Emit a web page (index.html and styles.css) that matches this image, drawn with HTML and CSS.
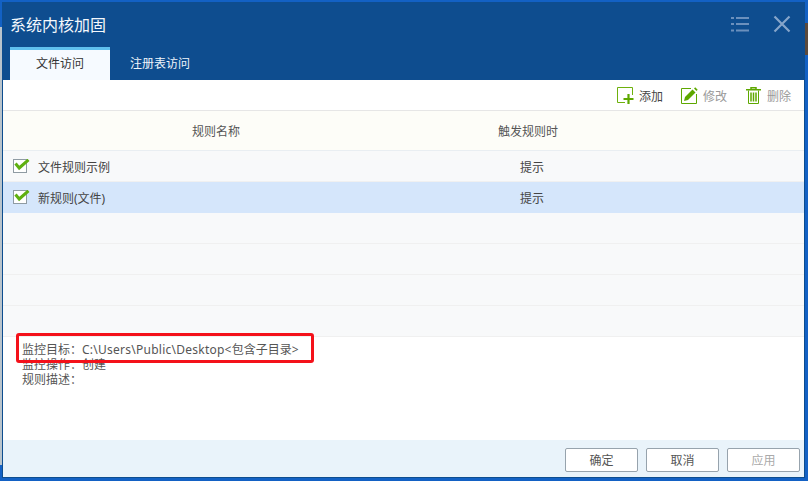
FILE: index.html
```html
<!DOCTYPE html>
<html lang="zh">
<head>
<meta charset="utf-8">
<title>系统内核加固</title>
<link rel="stylesheet" href="styles.css">
</head>
<body>
<div class="desk-strip"></div>
<div class="desk-thumb"></div>
<div class="window">
  <header class="titlebar">
    <div class="title-row">
      <h1 class="title">系统内核加固</h1>
      <div class="win-controls">
        <svg width="18" height="16" viewBox="0 0 18 16"><path d="M0 2h3M5 2h13M0 8h3M5 8h13M0 14.500h3M5 14.500h13" stroke="#6b90bd" stroke-width="2" fill="none"/></svg>
        <svg width="18" height="18" viewBox="0 0 18 18"><path d="M1.500 1.500l15 15M16.500 1.500l-15 15" stroke="#86a5ca" stroke-width="2.200" fill="none"/></svg>
      </div>
    </div>
    <nav class="tabs">
      <div class="tab tab-active">文件访问</div>
      <div class="tab">注册表访问</div>
    </nav>
  </header>
  <div class="toolbar">
    <div class="tool">
      <svg width="17" height="17" viewBox="0 0 17 17"><path d="M8 15.500H.5V.5h15V8" fill="none" stroke="#6eb10c"/><path d="M11.500 7v10M6.500 12h10" stroke="#5ea800" stroke-width="2.200" fill="none"/></svg>
      <span>添加</span>
    </div>
    <div class="tool tool-muted">
      <svg width="17" height="17" viewBox="0 0 17 17"><path d="M10 1.500H.5v15h15V7" fill="none" stroke="#5ea800"/><path d="M3 14l1-4 7.500-7.500 3 3L7 13z" fill="#5ea800"/><path d="M13 1.500l1.200-1.200 2.500 2.500-1.200 1.200z" fill="#5ea800"/></svg>
      <span>修改</span>
    </div>
    <div class="tool tool-muted">
      <svg width="17" height="17" viewBox="0 0 17 17"><path d="M1 2.800h15M6 2.500V.7h5v1.800" fill="none" stroke="#5ea800" stroke-width="1.500"/><path d="M3.500 3.500v13h10v-13" fill="none" stroke="#5ea800"/><path d="M6 5.500v9M8.500 5.500v9M11 5.500v9" stroke="#5ea800" stroke-width="1.500"/></svg>
      <span>删除</span>
    </div>
  </div>
  <div class="table-head">
    <div class="col-name">规则名称</div>
    <div class="col-action">触发规则时</div>
  </div>
  <div class="rows">
    <div class="row">
      <div class="col-name-cell"><span class="check"><svg width="18" height="15" viewBox="0 0 18 15"><path d="M1.500 4.500l3.700 4.500L14.500 .8" fill="none" stroke="#5fb010" stroke-width="3"/></svg></span>文件规则示例</div>
      <div class="col-action-cell">提示</div>
    </div>
    <div class="row row-selected">
      <div class="col-name-cell"><span class="check"><svg width="18" height="15" viewBox="0 0 18 15"><path d="M1.500 4.500l3.700 4.500L14.500 .8" fill="none" stroke="#5fb010" stroke-width="3"/></svg></span>新规则(文件)</div>
      <div class="col-action-cell">提示</div>
    </div>
    <div class="row"></div>
    <div class="row"></div>
    <div class="row"></div>
    <div class="row"></div>
  </div>
  <div class="details">
    <div class="highlight"></div>
    <p>监控目标：<span class="path">C:\Users\Public\Desktop&lt;</span>包含子目录<span class="path">&gt;</span></p>
    <p>监控操作：创建</p>
    <p>规则描述：</p>
  </div>
  <footer class="footer">
    <button class="btn">确定</button>
    <button class="btn">取消</button>
    <button class="btn btn-disabled">应用</button>
  </footer>
</div>
</body>
</html>
```

FILE: styles.css
```css
* { box-sizing: border-box; }
html, body { margin: 0; height: 100%; }
body {
  background: #1361c4;
  padding: 2px 3px 0 2px;
  overflow: hidden;
  font-family: "Noto Sans", "Noto Sans CJK SC", sans-serif;
  font-size: 12px;
  color: #444;
  position: relative;
}
.desk-strip {
  position: absolute;
  left: 0;
  top: 27px;
  width: 2px;
  height: 438px;
  background: #b9c4cc;
}
.desk-thumb {
  position: absolute;
  left: 805px;
  top: 23px;
  width: 3px;
  height: 32px;
  background: #5b4a3c;
}
.window {
  width: 803px;
  height: 476px;
  display: flex;
  flex-direction: column;
  background: #fff;
  border: 1px solid #0d4d8f;
  border-top: 0;
  position: relative;
}
.titlebar { background: #0e4d8f; height: 78px; }
.title-row {
  height: 45px;
  display: flex;
  align-items: center;
  justify-content: space-between;
  padding: 0 13px 2px 7px;
}
.title { margin: 0; font-size: 16px; font-weight: 400; color: #f4f8fc; }
.win-controls { display: flex; align-items: center; gap: 24px; }
.win-controls svg { display: block; }
.tabs { display: flex; padding-left: 7px; }
.tab {
  width: 100px;
  height: 33px;
  color: #eef5fb;
  display: flex;
  align-items: center;
  justify-content: center;
  padding-bottom: 1px;
}
.tab-active { background: #f6faff; border-top: 3px solid #5fc0ee; color: #333; padding-bottom: 4px; }
.toolbar {
  height: 31px;
  display: flex;
  justify-content: flex-end;
  align-items: center;
  gap: 18px;
  padding-right: 13px;
  border-bottom: 1px solid #e6e6e6;
}
.tool { display: flex; align-items: center; gap: 5px; color: #444; }
.tool svg { display: block; }
.tool span { margin-top: 2px; }
.tool-muted { color: #999; }
.table-head {
  height: 40px;
  display: flex;
  align-items: center;
  background: #fdfdf8;
  border-bottom: 1px solid #e9eef2;
  color: #555;
}
.col-name { width: 426px; text-align: center; }
.col-action { width: 198px; text-align: center; }
.row {
  height: 31px;
  display: flex;
  align-items: center;
  background: #f8f9fa;
  border-bottom: 1px solid #f0f0f0;
  color: #444;
}
.row-selected { background: #d5e6fb; border-bottom-color: #d5e6fb; }
.col-name-cell { width: 503px; display: flex; align-items: center; padding: 2px 0 0 10px; }
.col-action-cell { width: 50px; text-align: center; margin-left: 1px; padding-top: 2px; }
.check {
  width: 14px;
  height: 14px;
  border: 1px solid #8f9ba3;
  background: #fff;
  margin: -2px 11px 0 0;
  position: relative;
}
.check svg { position: absolute; left: 0; top: -1px; }
.details {
  flex: 1;
  padding: 5px 0 0 19px;
  line-height: 15px;
  color: #555;
  position: relative;
}
.details p { margin: 0; }
.path { letter-spacing: .25px; }
.highlight {
  position: absolute;
  left: 13px;
  top: -4px;
  width: 298px;
  height: 30px;
  border: 3px solid #f4111a;
  border-radius: 3px;
  pointer-events: none;
}
.footer {
  height: 37px;
  background: #e9f3fa;
  display: flex;
  justify-content: flex-end;
  align-items: flex-start;
  gap: 8px;
  padding: 8px 4px 0 0;
}
.btn {
  width: 73px;
  height: 24px;
  background: #fff;
  border: 1px solid #97a3ad;
  border-radius: 2px;
  font: inherit;
  color: #555;
  padding: 0;
}
.btn-disabled { color: #aaa; }
```
